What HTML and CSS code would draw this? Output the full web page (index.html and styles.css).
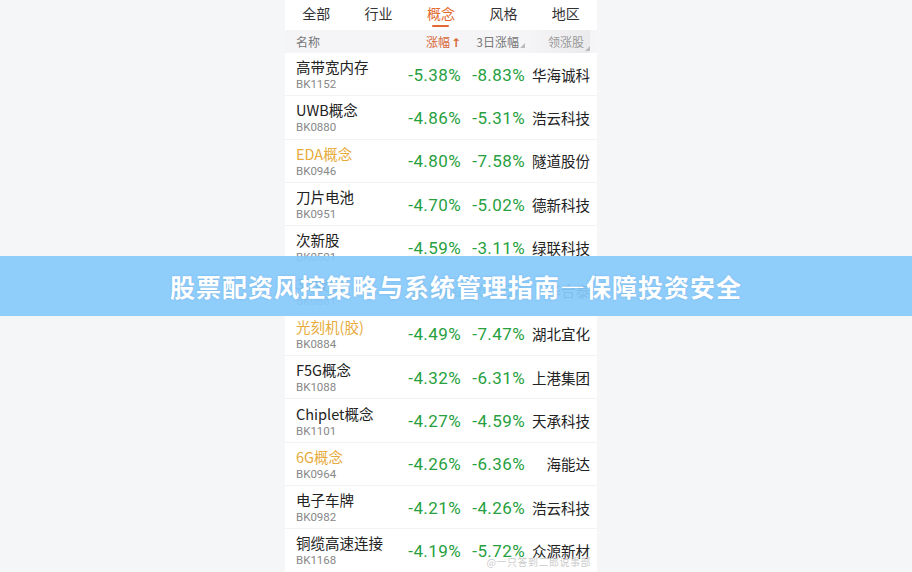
FILE: index.html
```html
<!DOCTYPE html>
<html lang="zh-CN">
<head>
    <meta charset="UTF-8">
    <meta name="viewport" content="width=device-width, initial-scale=1.0">
    <title>概念板块涨幅</title>
    <link rel="stylesheet" href="styles.css">
</head>
<body>
    <div class="phone">
        <!-- 顶部分类 -->
        <div class="tabs">
            <div class="tab">全部</div>
            <div class="tab">行业</div>
            <div class="tab active">概念</div>
            <div class="tab">风格</div>
            <div class="tab">地区</div>
        </div>

        <!-- 表头 -->
        <div class="head">
            <div class="col-name">名称</div>
            <div class="col-pct sorted">涨幅<span class="arrow">↑</span></div>
            <div class="col-pct2">3日涨幅<span class="tri"></span></div>
            <div class="col-lead">领涨股<span class="tri"></span></div>
        </div>

        <!-- 列表 -->
        <div class="list">
            <div class="row">
                <div class="col-name"><div class="name">高带宽内存</div><div class="code">BK1152</div></div>
                <div class="col-pct">-5.38%</div>
                <div class="col-pct2">-8.83%</div>
                <div class="col-lead">华海诚科</div>
            </div>
            <div class="row">
                <div class="col-name"><div class="name">UWB概念</div><div class="code">BK0880</div></div>
                <div class="col-pct">-4.86%</div>
                <div class="col-pct2">-5.31%</div>
                <div class="col-lead">浩云科技</div>
            </div>
            <div class="row">
                <div class="col-name"><div class="name gold">EDA概念</div><div class="code">BK0946</div></div>
                <div class="col-pct">-4.80%</div>
                <div class="col-pct2">-7.58%</div>
                <div class="col-lead">隧道股份</div>
            </div>
            <div class="row">
                <div class="col-name"><div class="name">刀片电池</div><div class="code">BK0951</div></div>
                <div class="col-pct">-4.70%</div>
                <div class="col-pct2">-5.02%</div>
                <div class="col-lead">德新科技</div>
            </div>
            <div class="row">
                <div class="col-name"><div class="name">次新股</div><div class="code">BK0501</div></div>
                <div class="col-pct">-4.59%</div>
                <div class="col-pct2">-3.11%</div>
                <div class="col-lead">绿联科技</div>
            </div>
            <div class="row">
                <div class="col-name"><div class="name">3D玻璃</div><div class="code">BK0881</div></div>
                <div class="col-pct">-4.56%</div>
                <div class="col-pct2">-6.15%</div>
                <div class="col-lead">华合泰</div>
            </div>
            <div class="row">
                <div class="col-name"><div class="name gold">光刻机(胶)</div><div class="code">BK0884</div></div>
                <div class="col-pct">-4.49%</div>
                <div class="col-pct2">-7.47%</div>
                <div class="col-lead">湖北宜化</div>
            </div>
            <div class="row">
                <div class="col-name"><div class="name">F5G概念</div><div class="code">BK1088</div></div>
                <div class="col-pct">-4.32%</div>
                <div class="col-pct2">-6.31%</div>
                <div class="col-lead">上港集团</div>
            </div>
            <div class="row">
                <div class="col-name"><div class="name">Chiplet概念</div><div class="code">BK1101</div></div>
                <div class="col-pct">-4.27%</div>
                <div class="col-pct2">-4.59%</div>
                <div class="col-lead">天承科技</div>
            </div>
            <div class="row">
                <div class="col-name"><div class="name gold">6G概念</div><div class="code">BK0964</div></div>
                <div class="col-pct">-4.26%</div>
                <div class="col-pct2">-6.36%</div>
                <div class="col-lead">海能达</div>
            </div>
            <div class="row">
                <div class="col-name"><div class="name">电子车牌</div><div class="code">BK0982</div></div>
                <div class="col-pct">-4.21%</div>
                <div class="col-pct2">-4.26%</div>
                <div class="col-lead">浩云科技</div>
            </div>
            <div class="row">
                <div class="col-name"><div class="name">铜缆高速连接</div><div class="code">BK1168</div></div>
                <div class="col-pct">-4.19%</div>
                <div class="col-pct2">-5.72%</div>
                <div class="col-lead">众源新材</div>
            </div>
        </div>

        <div class="watermark">@一只答到二郎说事部</div>
    </div>

    <!-- 标题横幅 -->
    <div class="banner">股票配资风控策略与系统管理指南—保障投资安全</div>
</body>
</html>
```

FILE: styles.css
```css
/* 全局 */
body {
    margin: 0;
    padding: 0;
    background: #f5f6f8;
    font-family: 'Noto Sans CJK SC', 'Noto Sans', sans-serif;
    color: #222;
    height: 572px;
    overflow: hidden;
}

.phone {
    position: relative;
    width: 312px;
    margin-left: 285px;
    background: #fff;
    height: 572px;
}

/* 分类 */
.tabs {
    display: flex;
    height: 30px;
}

.tab {
    flex: 1;
    text-align: center;
    font-size: 14px;
    line-height: 26px;
    color: #333;
    position: relative;
}

.tab.active {
    color: #e2692f;
}

.tab.active::after {
    content: '';
    position: absolute;
    left: 50%;
    bottom: 3px;
    width: 17px;
    height: 2px;
    margin-left: -9px;
    border-radius: 1px;
    background: #e2692f;
}

/* 表头 */
.head {
    display: flex;
    align-items: center;
    height: 23px;
    padding: 0 7px 0 11px;
    background: #f5f5f7;
    font-size: 12px;
    color: #777;
}

.head .col-pct2,
.head .col-lead {
    position: relative;
    padding-right: 6px;
}

.head .sorted {
    color: #d7693a;
}

.arrow {
    font-family: 'DejaVu Sans', sans-serif;
    font-size: 12px;
    font-weight: bold;
    margin-left: 1px;
}

.tri {
    position: absolute;
    right: 0;
    bottom: 2px;
    width: 0;
    height: 0;
    border-left: 5px solid transparent;
    border-bottom: 5px solid #bbb;
}

.head .col-lead {
    color: #999;
    line-height: 23px;
    background: linear-gradient(90deg, #f5f5f7, #ebebed);
}

/* 列 */
.col-name {
    flex: 1;
    min-width: 0;
}

.col-pct,
.col-pct2,
.col-lead {
    box-sizing: border-box;
    text-align: right;
}

.col-pct {
    width: 70px;
}

.col-pct2 {
    width: 64px;
}

.col-lead {
    width: 65px;
}

/* 列表 */
.row {
    display: flex;
    align-items: center;
    height: 43.3px;
    box-sizing: border-box;
    padding: 0 7px 0 11px;
    border-bottom: 1px solid #f3f3f3;
}

.name {
    font-size: 14.5px;
    line-height: 18px;
    margin-top: 2px;
    color: #222;
    white-space: nowrap;
}

.name.gold {
    color: #e7ab3c;
}

.code {
    font-family: 'Roboto', sans-serif;
    font-size: 11.5px;
    line-height: 16px;
    color: #888;
}

.row .col-pct,
.row .col-pct2 {
    font-family: 'Roboto', sans-serif;
    font-size: 17px;
    letter-spacing: 0.4px;
    color: #27a03e;
    padding-top: 1px;
}

.row .col-lead {
    font-size: 14.5px;
    color: #222;
}

.watermark {
    position: absolute;
    right: 6px;
    bottom: 3px;
    font-size: 10px;
    color: #ccc;
    letter-spacing: 0.5px;
}

/* 横幅 */
.banner {
    position: absolute;
    top: 256px;
    left: 0;
    right: 0;
    height: 60px;
    background: rgba(134, 201, 251, 0.93);
    color: #fff;
    font-size: 25px;
    font-weight: bold;
    letter-spacing: 1px;
    line-height: 60px;
    text-align: center;
    text-shadow: 0 0 2px rgba(60, 120, 180, 0.3);
}
```
